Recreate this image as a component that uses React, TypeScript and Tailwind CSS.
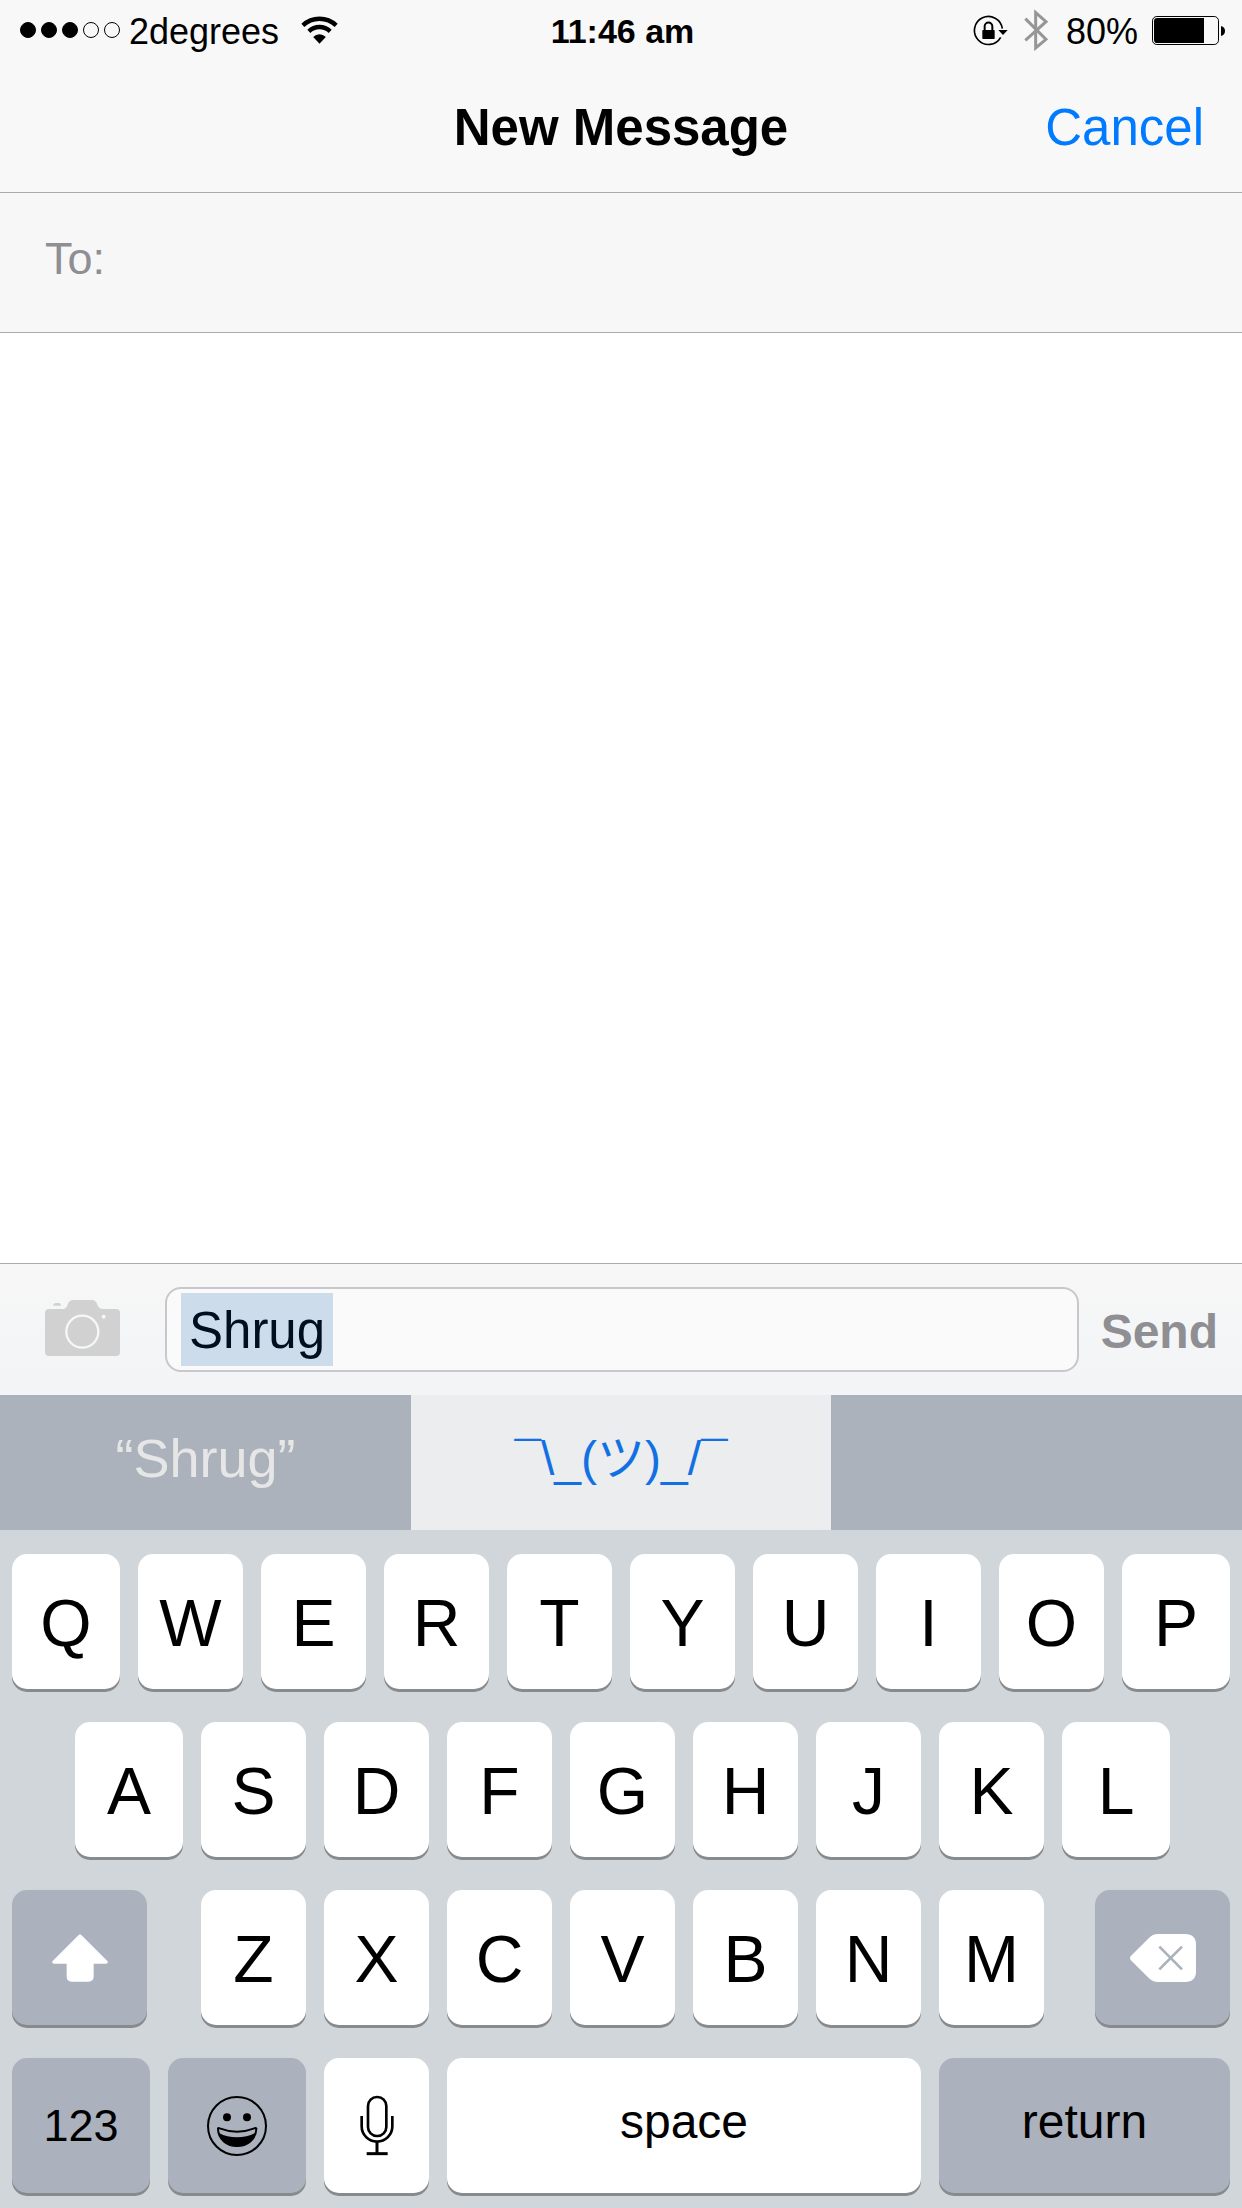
import React, { useState } from 'react';
import clsx from 'clsx';

const TOP_ROW = ['Q', 'W', 'E', 'R', 'T', 'Y', 'U', 'I', 'O', 'P'];
const HOME_ROW = ['A', 'S', 'D', 'F', 'G', 'H', 'J', 'K', 'L'];
const BOTTOM_ROW = ['Z', 'X', 'C', 'V', 'B', 'N', 'M'];

const WifiIcon = () => (
  <svg className="w-[37px] h-7" viewBox="0 0 110 84" fill="none" aria-hidden="true">
    <path d="M5 28 A73 73 0 0 1 105 28" stroke="#000" strokeWidth="13" />
    <path d="M23 46 A46 46 0 0 1 87 46" stroke="#000" strokeWidth="13" />
    <path d="M36 63 A26 26 0 0 1 74 63 L55 83 Z" fill="#000" />
  </svg>
);

const RotationLockIcon = () => (
  <svg className="w-[35px] h-[31px]" viewBox="0 0 105 93" fill="none" aria-hidden="true">
    <path d="M83 67 A42 42 0 1 1 88 41" stroke="#000" strokeWidth="5" />
    <path d="M76 45 H104 L90 60 Z" fill="#000" />
    <rect x="28" y="45" width="37" height="27" rx="2" fill="#000" />
    <path d="M35 47 V34 A11.5 11.5 0 0 1 58 34 V47" stroke="#000" strokeWidth="6" />
  </svg>
);

const BluetoothIcon = () => (
  <svg className="w-6 h-[42px]" viewBox="0 0 72 126" fill="none" aria-hidden="true">
    <path d="M4 29 L66 91 L35 117 V11 L66 38 L4 94" stroke="#969696" strokeWidth="9" />
  </svg>
);

const BatteryIcon = () => (
  <svg className="w-[73px] h-[29px]" viewBox="0 0 219 87" fill="none" aria-hidden="true">
    <rect x="1.5" y="1.5" width="198" height="84" rx="13" stroke="#000" strokeWidth="3" />
    <path d="M156 6 V81 H16 Q6 81 6 71 V16 Q6 6 16 6 Z" fill="#000" />
    <path d="M207 30 Q219 33 219 45 Q219 57 207 60 Z" fill="#000" />
  </svg>
);

const CameraIcon = () => (
  <svg className="w-[75px] h-14" viewBox="0 0 225 168" aria-hidden="true">
    <path
      d="M12 27 H56 Q64 26 67 16 Q72 0 85 0 H140 Q153 0 157 14 Q161 26 174 27 H213 Q225 27 225 39 V156 Q225 168 213 168 H12 Q0 168 0 156 V39 Q0 27 12 27 Z"
      fill="#d1d1d1"
    />
    <path d="M25 17 Q25 9 33 9 H41 Q48 9 48 17 Z" fill="#d1d1d1" />
    <circle cx="112" cy="95" r="48" fill="none" stroke="#f6f7f7" strokeWidth="7" />
    <circle cx="176" cy="50" r="6" fill="#f6f7f7" />
  </svg>
);

const ShiftIcon = () => (
  <svg className="w-14 h-12" viewBox="0 0 168 144" fill="#fff" aria-hidden="true">
    <path d="M80 3 Q84 -1 88 3 L166 81 Q169 84 166 87 Q165 89 161 89 H125 V127 Q125 143 109 143 H59 Q44 143 44 127 V89 H7 Q3 89 2 87 Q-1 84 2 81 Z" />
  </svg>
);

const DeleteIcon = () => (
  <svg className="w-[66px] h-12" viewBox="0 0 198 144" aria-hidden="true">
    <path
      d="M2 67 L57 12 Q68 0 83 0 H165 Q198 0 198 32 V112 Q198 144 165 144 H83 Q68 144 57 133 L2 78 Q-2 72 2 67 Z"
      fill="#fff"
    />
    <path d="M88 38 L156 106 M156 38 L88 106" stroke="#abb2bd" strokeWidth="8" />
  </svg>
);

const EmojiIcon = () => (
  <svg className="w-15 h-15" viewBox="0 0 180 180" fill="none" aria-hidden="true">
    <circle cx="90" cy="90" r="87" stroke="#000" strokeWidth="6" />
    <circle cx="60" cy="64" r="12" fill="#000" />
    <circle cx="120" cy="64" r="12" fill="#000" />
    <path
      d="M33 99 Q32 95 38 97 Q90 117 142 97 Q149 95 148 99 C147 130 120 150 90 150 C60 150 34 130 33 99 Z"
      stroke="#000"
      strokeWidth="6"
    />
    <path d="M36 111 Q60 124 90 124 Q120 124 144 111 Q136 150 90 151 Q44 150 36 111 Z" fill="#000" />
  </svg>
);

const MicIcon = () => (
  <svg className="w-[34px] h-[61px]" viewBox="0 0 102 183" fill="none" stroke="#000" aria-hidden="true">
    <rect x="24" y="6" width="55" height="117" rx="27" strokeWidth="8" />
    <path d="M5 63 V94 A46 46 0 0 0 97 94 V63" strokeWidth="8" />
    <path d="M51 140 V176" strokeWidth="9" />
    <path d="M20 176 H83" strokeWidth="9" />
  </svg>
);

interface KeyProps {
  children: React.ReactNode;
  className?: string;
  dark?: boolean;
  label?: string;
  onClick?: () => void;
}

const Key: React.FC<KeyProps> = ({ children, className, dark, label, onClick }) => (
  <button
    type="button"
    aria-label={label}
    onClick={onClick}
    className={clsx(
      'flex h-[135px] min-w-0 items-center justify-center rounded-[15px] shadow-[0_3px_0_#888b8e]',
      dark ? 'bg-[#abb2bd]' : 'bg-white',
      className
    )}
  >
    {children}
  </button>
);

interface LetterKeysProps {
  letters: string[];
  onType: (letter: string) => void;
  wideEnds?: boolean;
}

// The first and last key of a full row are slightly wider than the rest
const LetterKeys: React.FC<LetterKeysProps> = ({ letters, onType, wideEnds }) => (
  <>
    {letters.map((letter, index) => (
      <Key
        key={letter}
        onClick={() => onType(letter)}
        className={clsx(
          'basis-0 pt-1 text-[66px]',
          wideEnds && (index === 0 || index === letters.length - 1) ? 'grow-[108]' : 'grow-[105]'
        )}
      >
        {letter}
      </Key>
    ))}
  </>
);

const StatusBar: React.FC = () => (
  <div className="grid h-15 grid-cols-[1fr_auto_1fr] items-center pl-5 pr-[17px] text-4xl">
    <div className="flex items-center">
      <div className="flex gap-[5px]">
        {[1, 2, 3, 4, 5].map((bar) => (
          <span
            key={bar}
            className={clsx('size-4 rounded-full border border-black', bar <= 3 && 'bg-black')}
          />
        ))}
      </div>
      <span className="ml-[9px] mr-[22px] pt-1">2degrees</span>
      <WifiIcon />
    </div>
    <span className="pt-1 text-[34px] font-bold">11:46 am</span>
    <div className="flex items-center justify-end">
      <RotationLockIcon />
      <span className="ml-4 mr-[18px] flex">
        <BluetoothIcon />
      </span>
      <span className="mr-[14px] pt-1">80%</span>
      <BatteryIcon />
    </div>
  </div>
);

const App: React.FC = () => {
  const [recipient, setRecipient] = useState('');
  const [message, setMessage] = useState('Shrug');

  const handleType = (text: string) => {
    setMessage((current) => current + text);
  };

  return (
    <div className="flex min-h-screen flex-col bg-white font-['Liberation_Sans','Noto_Sans_CJK_JP',sans-serif] text-black">
      <header className="border-b border-[#acacac] bg-[#f8f8f8]">
        <StatusBar />
        <div className="grid h-[132px] grid-cols-[1fr_auto_1fr] items-center px-[38px] pt-1 text-[51px]">
          <h1 className="col-start-2 font-bold">New Message</h1>
          <button type="button" className="justify-self-end text-[#007aff]">
            Cancel
          </button>
        </div>
      </header>

      <div className="flex h-[140px] items-center border-b border-[#acacac] bg-[#f7f7f7] px-[45px] pb-2 text-[45px]">
        <label htmlFor="recipient" className="text-[#8e8e93]">
          To:
        </label>
        <input
          id="recipient"
          type="text"
          value={recipient}
          onChange={(e) => setRecipient(e.target.value)}
          className="ml-4 min-w-0 flex-1 bg-transparent outline-none"
        />
      </div>

      <main className="flex-1" />

      <form
        onSubmit={(e) => e.preventDefault()}
        className="flex h-[132px] items-center border-t border-[#acacac] bg-linear-to-b from-[#f7f7f7] to-[#f2f4f6] pl-[45px] pr-6 text-[51px]"
      >
        <button type="button" aria-label="Take photo" className="pb-1">
          <CameraIcon />
        </button>
        <label className="ml-[45px] mr-[22px] flex h-[85px] min-w-0 flex-1 items-center rounded-[16px] border-2 border-[#c8c7cc] bg-[#fafafa] pl-3.5">
          <input
            type="text"
            aria-label="Message"
            value={message}
            onChange={(e) => setMessage(e.target.value)}
            className="h-[73px] max-w-full field-sizing-content bg-[#cddceb] px-2 pt-1 text-[#000f1f] outline-none"
          />
        </label>
        <button type="submit" className="pt-1 text-5xl font-bold text-[#8e8e93]">
          Send
        </button>
      </form>

      <div className="grid h-[135px] grid-cols-[411fr_420fr_411fr] bg-[#abb2bc]">
        <button type="button" className="pb-2 text-[54px] text-[#e6e6e6]">
          “Shrug”
        </button>
        <button
          type="button"
          onClick={() => setMessage('¯\\_(ツ)_/¯')}
          className="bg-[#ebedee] pb-2 text-5xl text-[#1270e3]"
        >
          ¯\_(ツ)_/¯
        </button>
        <button type="button" aria-label="No suggestion" />
      </div>

      <div className="flex flex-col gap-[33px] bg-[#d1d6da] px-3 pb-[15px] pt-6">
        <div className="flex gap-[18px]">
          <LetterKeys letters={TOP_ROW} onType={handleType} wideEnds />
        </div>
        <div className="flex gap-[18px] pl-[63px] pr-15">
          <LetterKeys letters={HOME_ROW} onType={handleType} wideEnds />
        </div>
        <div className="flex">
          <Key dark label="Shift" className="w-[135px]">
            <ShiftIcon />
          </Key>
          <div className="ml-[54px] mr-[51px] flex flex-1 gap-[18px]">
            <LetterKeys letters={BOTTOM_ROW} onType={handleType} />
          </div>
          <Key
            dark
            label="Delete"
            className="w-[135px]"
            onClick={() => setMessage((current) => current.slice(0, -1))}
          >
            <DeleteIcon />
          </Key>
        </div>
        <div className="flex gap-[18px] text-5xl">
          <Key dark className="w-[138px] text-[45px]">
            123
          </Key>
          <Key dark label="Emoji" className="w-[138px]">
            <EmojiIcon />
          </Key>
          <Key label="Dictate" className="w-[105px]">
            <MicIcon />
          </Key>
          <Key className="flex-1 pb-2" onClick={() => handleType(' ')}>
            space
          </Key>
          <Key dark className="w-[291px] pb-2">
            return
          </Key>
        </div>
      </div>
    </div>
  );
};

export default App;
